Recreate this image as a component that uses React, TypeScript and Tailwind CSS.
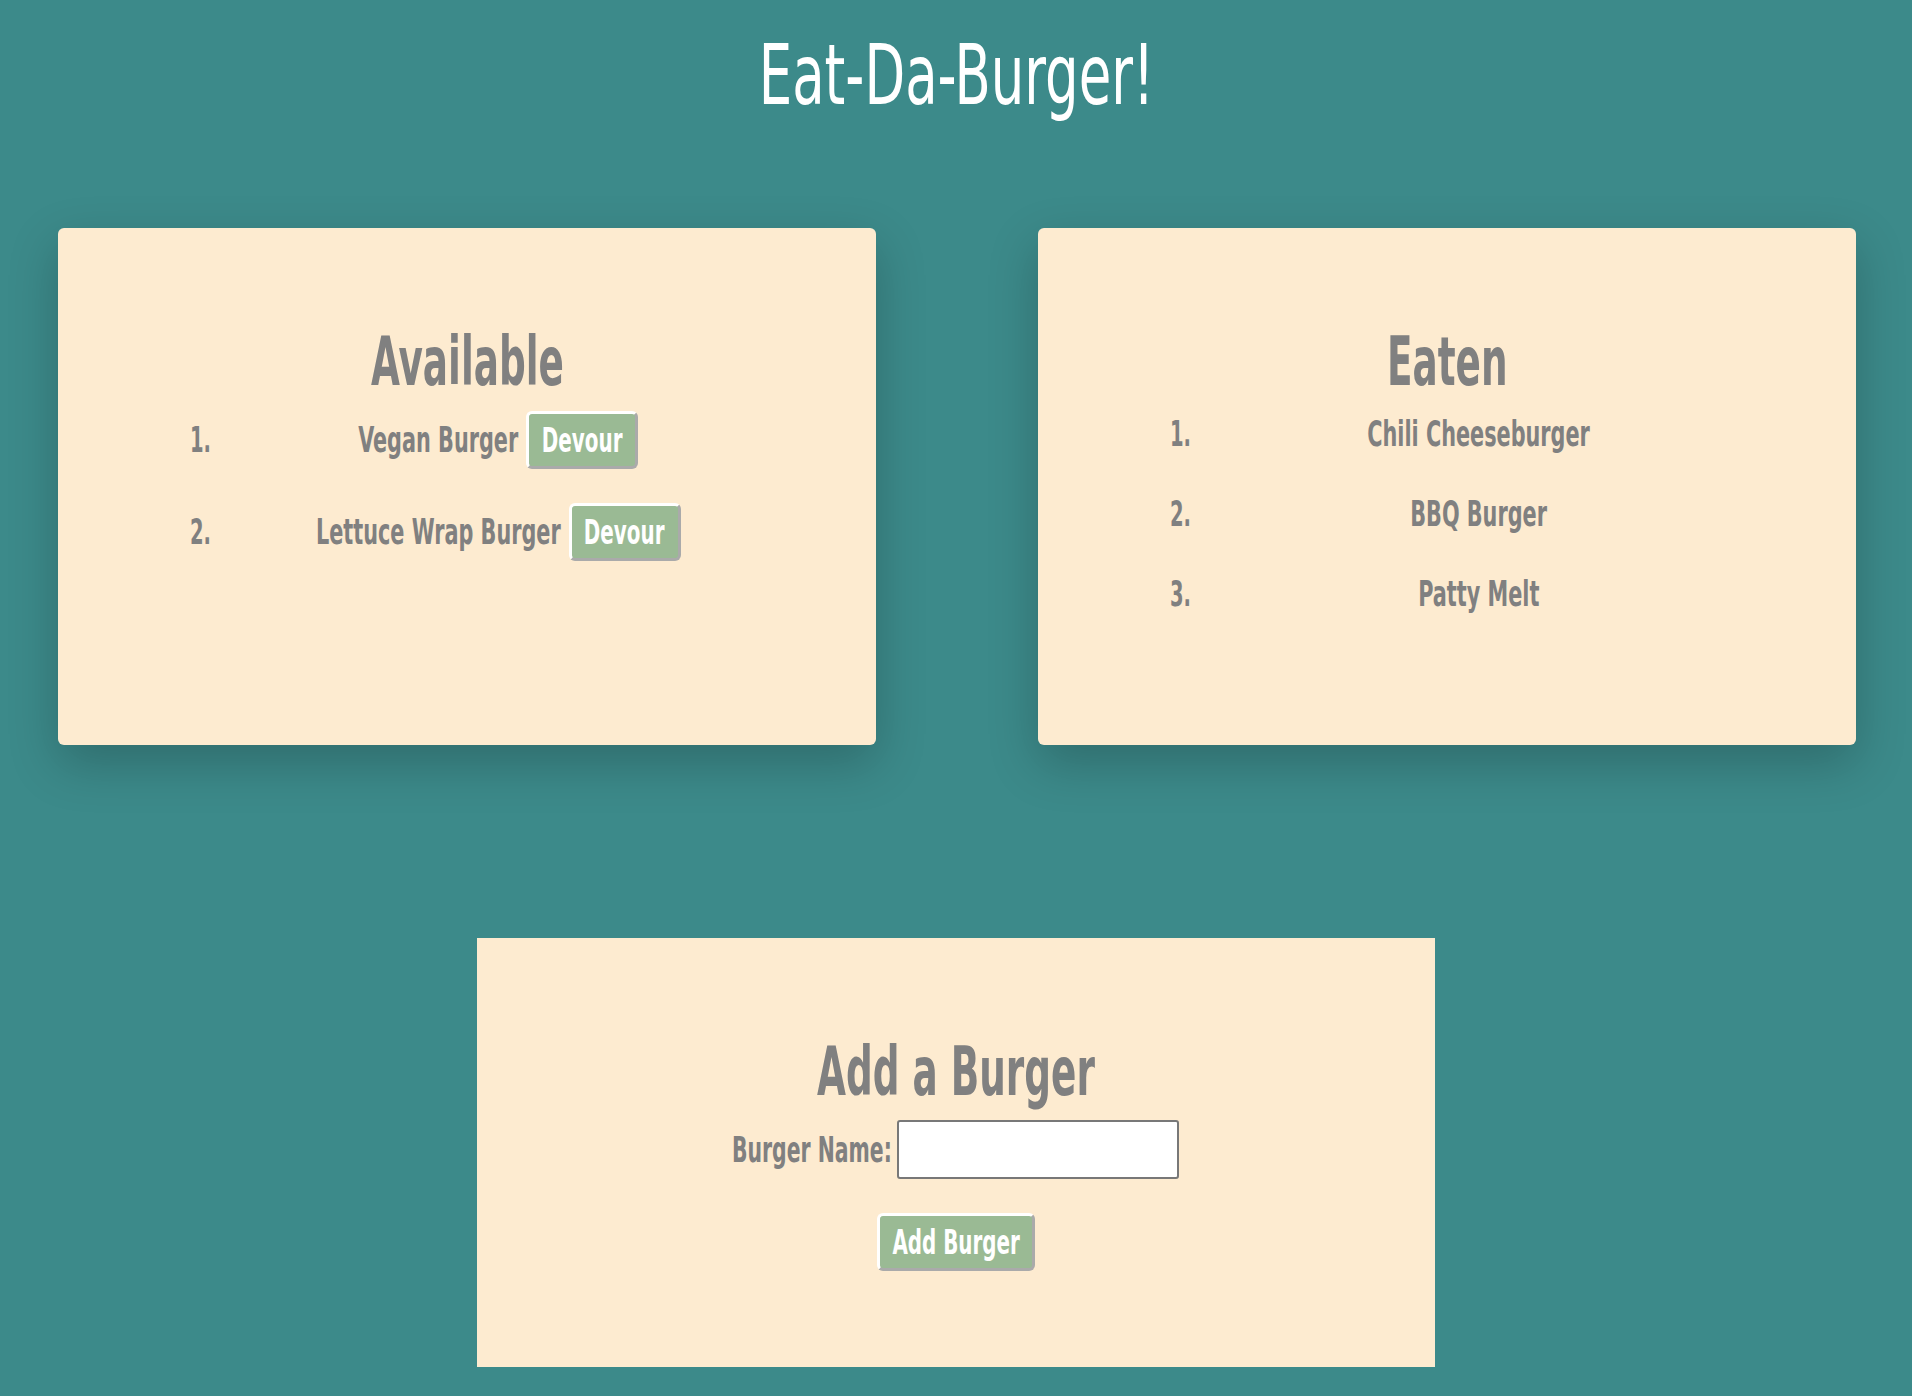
import React from "react";

const font = "font-['DejaVu_Sans_Condensed','DejaVu_Sans',sans-serif]";

type Item = { name: string; w: string };

function Narrow({ children, w, s }: { children: React.ReactNode; w: string; s: string }) {
  return (
    <span className={`flex justify-center ${w}`}>
      <span className={`shrink-0 whitespace-nowrap leading-none ${s}`}>{children}</span>
    </span>
  );
}

function GreenButton({ label, w, tw }: { label: string; w: string; tw: string }) {
  return (
    <button
      type="button"
      className={`flex h-[58px] shrink-0 items-center justify-center rounded-[6px] border-[3px] border-t-white border-l-white border-r-[#aaaaaa] border-b-[#aaaaaa] bg-[#9aba94] text-white text-[33px] font-bold ${w}`}
    >
      <Narrow w={tw} s="scale-x-[0.67]">
        {label}
      </Narrow>
    </button>
  );
}

function Num({ n }: { n: number }) {
  return (
    <span className="flex w-[18px] shrink-0 justify-end">
      <span className="shrink-0 origin-right scale-x-[0.62] leading-none">{n}.</span>
    </span>
  );
}

function Card({ title, titleW, children }: { title: string; titleW: string; children: React.ReactNode }) {
  return (
    <div className="h-[517px] rounded-md bg-[#fdebd0] pt-[101px] shadow-[0_18px_50px_rgba(0,0,0,0.22)]">
      <h2 className="flex h-[67px] items-center justify-center text-[67px] font-bold">
        <Narrow w={titleW} s="scale-x-[0.62]">
          {title}
        </Narrow>
      </h2>
      <ol className="mt-[15px] flex flex-col gap-[34px] text-[35px] font-bold">{children}</ol>
    </div>
  );
}

export default function App() {
  const available: Item[] = [
    { name: "Vegan Burger", w: "w-[157px]" },
    { name: "Lettuce Wrap Burger", w: "w-[242px]" },
  ];
  const eaten: Item[] = [
    { name: "Chili Cheeseburger", w: "w-[218px]" },
    { name: "BBQ Burger", w: "w-[136px]" },
    { name: "Patty Melt", w: "w-[120px]" },
  ];
  return (
    <div className={`min-h-[1396px] bg-[#3c8a8a] ${font} text-[#808080]`}>
      <h1 className="flex justify-center pt-[33px] text-white text-[84px] font-normal">
        <span className="shrink-0 whitespace-nowrap leading-none scale-x-[0.7]">Eat-Da-Burger!</span>
      </h1>

      <div className="mt-[111px] grid grid-cols-2 gap-[162px] pl-[58px] pr-[56px]">
        <Card title="Available" titleW="w-[192px]">
          {available.map((b, i) => (
            <li key={b.name} className="flex h-[58px] items-center pl-[135px] pr-[89px]">
              <Num n={i + 1} />
              <div className="flex flex-1 items-center justify-center gap-[9px]">
                <Narrow w={b.w} s="scale-x-[0.66]">
                  {b.name}
                </Narrow>
                <GreenButton label="Devour" w="w-[112px]" tw="w-[80px]" />
              </div>
            </li>
          ))}
        </Card>
        <Card title="Eaten" titleW="w-[118px]">
          {eaten.map((b, i) => (
            <li key={b.name} className="flex h-[46px] items-center pl-[135px] pr-[89px]">
              <Num n={i + 1} />
              <div className="flex flex-1 items-center justify-center">
                <Narrow w={b.w} s="scale-x-[0.66]">
                  {b.name}
                </Narrow>
              </div>
            </li>
          ))}
        </Card>
      </div>

      <div className="mx-auto mt-[193px] flex h-[429px] w-[958px] flex-col items-center bg-[#fdebd0] pt-[101px]">
        <h2 className="flex h-[67px] items-center justify-center text-[67px] font-bold">
          <Narrow w="w-[278px]" s="scale-x-[0.62]">
            Add a Burger
          </Narrow>
        </h2>
        <div className="mt-[14px] flex items-center gap-[6px]">
          <label htmlFor="burger" className="text-[36px] font-bold">
            <Narrow w="w-[158px]" s="scale-x-[0.63]">
              Burger Name:
            </Narrow>
          </label>
          <input
            id="burger"
            type="text"
            className="h-[59px] w-[282px] rounded-[3px] border-2 border-[#787878] bg-white px-2 text-[24px] outline-none"
          />
        </div>
        <div className="mt-[34px]">
          <GreenButton label="Add Burger" w="w-[158px]" tw="w-[128px]" />
        </div>
      </div>
    </div>
  );
}
